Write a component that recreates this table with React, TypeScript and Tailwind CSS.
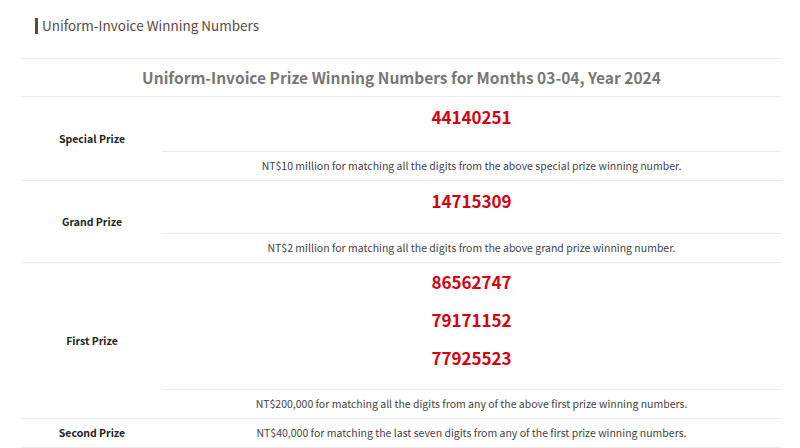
import React from "react";

const font = { fontFamily: '"Noto Sans CJK TC", "Noto Sans", sans-serif' };

function Desc({ children }: { children: React.ReactNode }) {
  return (
    <div className="h-[29px] flex items-center justify-center text-[10.5px] text-[#444] border-t border-[#ece9e4]">
      {children}
    </div>
  );
}

function Num({ n }: { n: string }) {
  return <div className="text-[17px] font-bold text-[#d7000f] leading-none">{n}</div>;
}

function Row({
  label,
  children,
}: {
  label: string;
  children: React.ReactNode;
}) {
  return (
    <div className="flex border-b border-[#ece9e4]">
      <div className="w-[140px] shrink-0 flex items-center justify-center text-[10.5px] font-bold text-[#222]">
        {label}
      </div>
      <div className="flex-1 flex flex-col">{children}</div>
    </div>
  );
}

export default function App() {
  return (
    <div className="w-[800px] h-[448px] bg-white overflow-hidden" style={font}>
      <div className="h-[58px] flex pl-[35px] pt-[17px]">
        <div className="flex items-center h-[18px]">
          <div className="w-[3px] h-[16px] bg-[#5b4a48] mr-[4px]" />
          <span className="text-[13.5px] text-[#5b4a48] leading-none">Uniform-Invoice Winning Numbers</span>
        </div>
      </div>
      <div className="ml-[22px] mr-[19px] border-t border-[#ece9e4]">
        <div className="h-[38px] flex items-center justify-center text-[15.5px] font-bold text-[#777] border-b border-[#ece9e4]">
          Uniform-Invoice Prize Winning Numbers for Months 03-04, Year 2024
        </div>
        <Row label="Special Prize">
          <div className="h-[54px] flex justify-center pt-[11px]">
            <Num n="44140251" />
          </div>
          <Desc>NT$10 million for matching all the digits from the above special prize winning number.</Desc>
        </Row>
        <Row label="Grand Prize">
          <div className="h-[52px] flex justify-center pt-[11px]">
            <Num n="14715309" />
          </div>
          <Desc>NT$2 million for matching all the digits from the above grand prize winning number.</Desc>
        </Row>
        <Row label="First Prize">
          <div className="h-[126px] flex flex-col items-center pt-[10px] gap-[21px]">
            <Num n="86562747" />
            <Num n="79171152" />
            <Num n="77925523" />
          </div>
          <Desc>NT$200,000 for matching all the digits from any of the above first prize winning numbers.</Desc>
        </Row>
        <div className="flex border-b border-[#ece9e4] h-[29px]">
          <div className="w-[140px] shrink-0 flex items-center justify-center text-[10.5px] font-bold text-[#222]">
            Second Prize
          </div>
          <div className="flex-1 flex items-center justify-center text-[10.5px] text-[#444]">
            NT$40,000 for matching the last seven digits from any of the first prize winning numbers.
          </div>
        </div>
      </div>
    </div>
  );
}
